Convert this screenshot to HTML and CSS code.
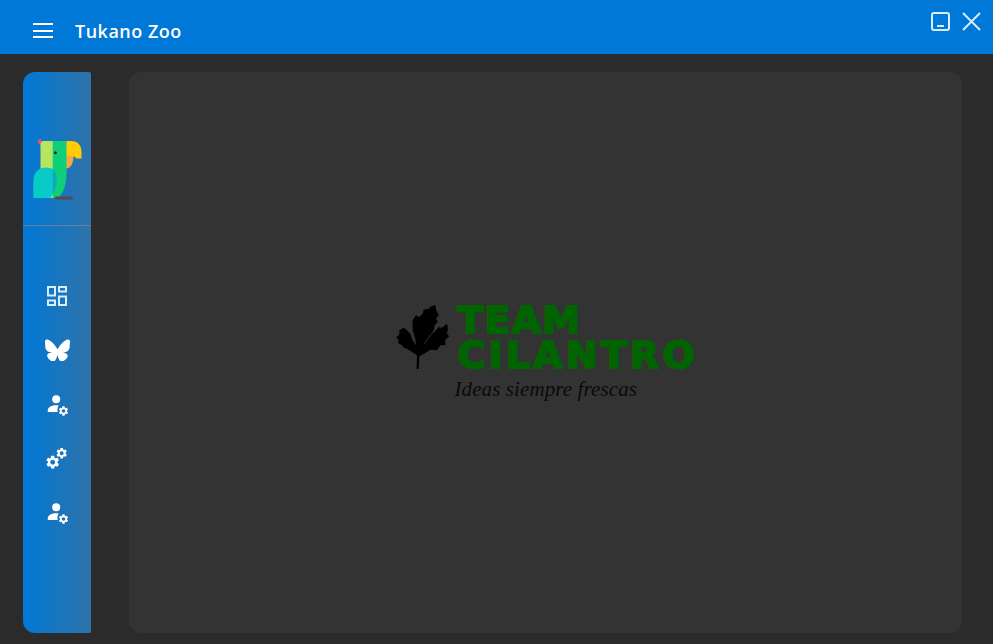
FILE: index.html
```html
<!DOCTYPE html>
<html lang="en">
<head>
    <meta charset="UTF-8">
    <title>Tukano Zoo</title>
    <link rel="stylesheet" href="styles.css">
</head>
<body>
    <svg class="icon-defs" width="0" height="0">
        <symbol id="gear" viewBox="0 0 24 24">
            <path d="M19.14 12.94c.04-.3.06-.61.06-.94 0-.32-.02-.64-.07-.94l2.03-1.58a.49.49 0 0 0 .12-.61l-1.92-3.32a.488.488 0 0 0-.59-.22l-2.39.96c-.5-.38-1.03-.7-1.62-.94l-.36-2.54a.484.484 0 0 0-.48-.41h-3.84c-.24 0-.43.17-.47.41l-.36 2.54c-.59.24-1.13.57-1.62.94l-2.39-.96c-.22-.08-.47 0-.59.22L2.74 8.87c-.12.21-.08.47.12.61l2.03 1.58c-.05.3-.09.63-.09.94s.02.64.07.94l-2.03 1.58a.49.49 0 0 0-.12.61l1.92 3.32c.12.22.37.29.59.22l2.39-.96c.5.38 1.03.7 1.62.94l.36 2.54c.05.24.24.41.48.41h3.84c.24 0 .44-.17.47-.41l.36-2.54c.59-.24 1.13-.56 1.62-.94l2.39.96c.22.08.47 0 .59-.22l1.92-3.32c.12-.22.07-.47-.12-.61l-2.01-1.58zM12 15.6c-1.98 0-3.6-1.62-3.6-3.6s1.62-3.6 3.6-3.6 3.6 1.62 3.6 3.6-1.62 3.6-3.6 3.6z"/>
        </symbol>
        <symbol id="user-cog" viewBox="0 0 22 22">
            <circle cx="9.200" cy="5.300" r="4"/>
            <path d="M.8 18v-1.500c0-3 3.500-5.200 8-5.200 1 0 2 .1 2.800.3-.8 1.200-1.200 2.600-1.200 4 0 .9.1 1.700.4 2.400z"/>
            <use href="#gear" x="10.700" y="11.200" width="11.600" height="11.600"/>
        </symbol>
    </svg>

    <header class="titlebar">
        <div class="titlebar-left">
            <button class="menu-btn">
                <span></span>
                <span></span>
                <span></span>
            </button>
            <h1 class="app-title">Tukano Zoo</h1>
        </div>
        <div class="window-buttons">
            <svg class="window-icon" viewBox="0 0 19 19">
                <rect x="1" y="1" width="17" height="17" rx="2"/>
                <path d="M6 14h7"/>
            </svg>
            <svg class="window-icon" viewBox="0 0 19 19">
                <path d="M1 1l17 17M18 1L1 18"/>
            </svg>
        </div>
    </header>

    <div class="content">
        <aside class="sidebar">
            <div class="sidebar-logo">
                <svg class="parrot" viewBox="33 138 50 62">
                    <path class="parrot-crest" d="M37 141.500l3-2.700 4 4.200-3 3z"/>
                    <path class="parrot-orange" d="M66 155h7.500q0 13-7.500 13.500z"/>
                    <path class="parrot-yellow" d="M66 141h5q10.500 0 10.500 12v5.500h-5q-2-3-4.500-2.500h-6z"/>
                    <path class="parrot-light" d="M44 141h9v57h-5q-7.500-9-7.500-22v-31.500q0-3.500 3.500-3.500z"/>
                    <path class="parrot-green" d="M52.700 141H66.500v33q0 15-8 24h-5.800z"/>
                    <path class="parrot-wing" d="M33.300 198v-15q0-15.500 13-15.500 10.500 0 10.500 11.500 0 11-6.500 19z"/>
                    <path class="parrot-overlap" d="M52.700 169.500q4.100 2.500 4.100 9.500 0 8-4.100 15z"/>
                    <path class="parrot-perch" d="M55 196.500h16.500a1.500 1.500 0 0 1 0 3H55z"/>
                    <circle class="parrot-eye" cx="55.400" cy="152.800" r="1.500"/>
                </svg>
            </div>
            <nav class="sidebar-nav">
                <a class="nav-item">
                    <svg class="nav-dash" viewBox="0 0 20 20">
                        <rect x="1" y="1" width="7" height="8.500"/>
                        <rect x="12" y="1" width="7" height="4.500"/>
                        <rect x="1" y="14.500" width="7" height="4.500"/>
                        <rect x="12" y="10.500" width="7" height="8.500"/>
                    </svg>
                </a>
                <a class="nav-item">
                    <svg class="nav-fly" viewBox="0 0 24 22">
                        <path d="M12 10.800c-1.087-2.114-4.046-6.053-6.798-7.995C2.566.944 1.561 1.266.902 1.565.139 1.908 0 3.080 0 3.768c0 .690.378 5.650.624 6.479.815 2.736 3.713 3.660 6.383 3.364-3.912.580-7.387 2.005-2.830 7.078 5.013 5.190 6.870-1.113 7.823-4.308.953 3.195 2.050 9.271 7.733 4.308 4.267-4.308 1.172-6.498-2.740-7.078 2.670.297 5.568-.628 6.383-3.364.246-.828.624-5.790.624-6.479 0-.688-.139-1.860-.902-2.203-.659-.299-1.664-.621-4.300 1.240C16.046 4.748 13.087 8.687 12 10.800Z"/>
                    </svg>
                </a>
                <a class="nav-item">
                    <svg class="nav-user"><use href="#user-cog"/></svg>
                </a>
                <a class="nav-item">
                    <svg class="nav-gears" viewBox="0 0 24 24">
                        <use href="#gear" x="-.3" y="7.200" width="16" height="16"/>
                        <use href="#gear" x="10.200" y="-.3" width="13" height="13"/>
                    </svg>
                </a>
                <a class="nav-item">
                    <svg class="nav-user"><use href="#user-cog"/></svg>
                </a>
            </nav>
        </aside>

        <main class="panel">
            <div class="brand">
                <div class="brand-top">
                    <svg class="leaf" viewBox="12 14 160 192">
                        <path d="M74 206L75 165 60 155 45 145 35 142 30 135 18 128 20 118 12 112 22 103 22 90 35 82 45 90 55 100 62 120 72 135 70 115 62 90 62 60 72 45 82 50 92 40 95 28 110 25 118 18 130 14 133 30 140 45 132 55 138 65 128 75 125 90 115 105 130 92 140 80 150 82 165 70 168 85 165 100 172 108 160 118 160 135 145 135 135 150 115 148 100 158 82 168 80 206Z"/>
                        <path class="leaf-vein" d="M97 130l21-30"/>
                    </svg>
                    <h2 class="brand-name">TEAM<br>CILANTRO</h2>
                </div>
                <p class="brand-tagline">Ideas siempre frescas</p>
            </div>
        </main>
    </div>
</body>
</html>
```

FILE: styles.css
```css
* {
    margin: 0;
    padding: 0;
    box-sizing: border-box;
}

body {
    height: 100vh;
    display: flex;
    flex-direction: column;
    background-color: #2b2b2b;
    font-family: "DejaVu Sans", sans-serif;
    overflow: hidden;
}

.icon-defs {
    position: absolute;
}

/* Title bar */
.titlebar {
    height: 54px;
    flex-shrink: 0;
    display: flex;
    justify-content: space-between;
    background-color: #0078d7;
    color: white;
}

.titlebar-left {
    display: flex;
    align-items: center;
    padding-left: 33px;
    padding-top: 7px;
    gap: 22px;
}

.menu-btn {
    width: 20px;
    display: flex;
    flex-direction: column;
    gap: 4.500px;
    background: none;
    border: none;
}

.menu-btn span {
    display: block;
    height: 2px;
    background-color: white;
}

.app-title {
    font-family: "Open Sans", sans-serif;
    font-size: 18px;
    font-weight: 600;
    letter-spacing: 0.5px;
}

.window-buttons {
    display: flex;
    gap: 12px;
    padding: 12px 12px 0 0;
}

.window-icon {
    width: 19px;
    height: 19px;
    fill: none;
    stroke: #d9ecfa;
    stroke-width: 2;
}

/* Main area */
.content {
    flex: 1;
    display: flex;
    gap: 38px;
    padding: 18px 31px 11px 23px;
    min-height: 0;
}

/* Side menu */
.sidebar {
    width: 68px;
    flex-shrink: 0;
    background: linear-gradient(to right, #0078d7, #2f73a8);
    border-radius: 12px 2px 2px 12px;
}

.sidebar-logo {
    height: 154px;
    padding: 66px 0 0 10px;
    border-bottom: 1px solid #5f80a0;
}

.parrot {
    display: block;
    width: 50px;
    height: 62px;
}

.parrot-crest { fill: #e0566b; }
.parrot-orange { fill: #f6a83f; }
.parrot-yellow { fill: #ffcb05; }
.parrot-light { fill: #b6e65f; }
.parrot-green { fill: #0fcf78; }
.parrot-wing { fill: #08cbc8; }
.parrot-overlap { fill: #10a9bb; }
.parrot-perch { fill: #5a4a4a; }
.parrot-eye { fill: #10303a; }

.sidebar-nav {
    display: flex;
    flex-direction: column;
    padding-top: 43px;
}

.nav-item {
    height: 54.250px;
    display: flex;
    align-items: center;
    justify-content: center;
    fill: white;
}

.nav-dash {
    width: 20px;
    height: 20px;
    fill: none;
    stroke: #d9ecfa;
    stroke-width: 2;
}

.nav-fly {
    width: 25px;
    height: 23px;
    margin-bottom: 1px;
}

.nav-user {
    width: 22px;
    height: 22px;
    margin-left: 1px;
}

.nav-gears {
    width: 24px;
    height: 24px;
}

/* Content panel */
.panel {
    flex: 1;
    display: flex;
    align-items: center;
    justify-content: center;
    background-color: #333333;
    border-radius: 12px;
}

.brand {
    display: flex;
    flex-direction: column;
}

.brand-top {
    display: flex;
    gap: 8.700px;
}

.leaf {
    width: 53.300px;
    height: 64px;
    fill: #000;
}

.leaf-vein {
    fill: none;
    stroke: #333333;
    stroke-width: 3;
}

.brand-name {
    width: 238px;
    height: 65px;
    margin-top: -2px;
    font-size: 38px;
    line-height: 35px;
    font-weight: bold;
    letter-spacing: 3.200px;
    color: #006400;
    -webkit-text-stroke: 2px #006400;
    white-space: nowrap;
}

.brand-name::first-line {
    letter-spacing: 1.200px;
}

.brand-tagline {
    margin: 8px 0 0 59px;
    height: 24px;
    line-height: 24px;
    font-family: "Liberation Serif", serif;
    font-style: italic;
    font-size: 21px;
    letter-spacing: 0.100px;
    color: #0a0a0a;
}
```
